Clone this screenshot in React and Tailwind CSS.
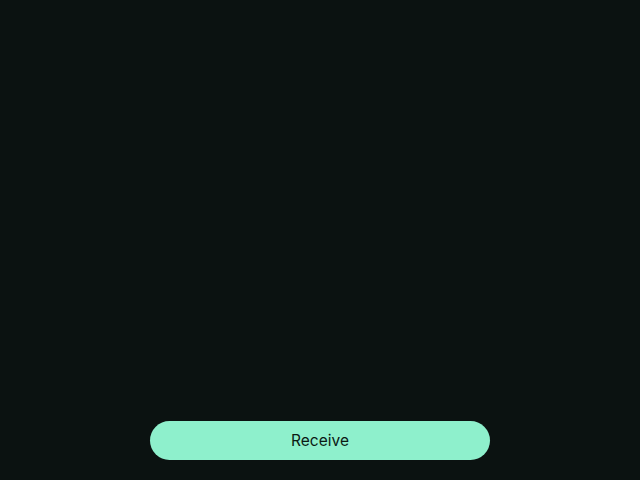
export default function App() {
  return (
    <div className="flex h-screen w-full flex-col items-center justify-end bg-[#0b1211] pb-5 font-['Inter',sans-serif]">
      {/* Bottom action */}
      <button className="h-[39px] w-[340px] rounded-full bg-[#8ef0cc] text-[15.5px] text-[#0c1a14]">
        Receive
      </button>
    </div>
  );
}
